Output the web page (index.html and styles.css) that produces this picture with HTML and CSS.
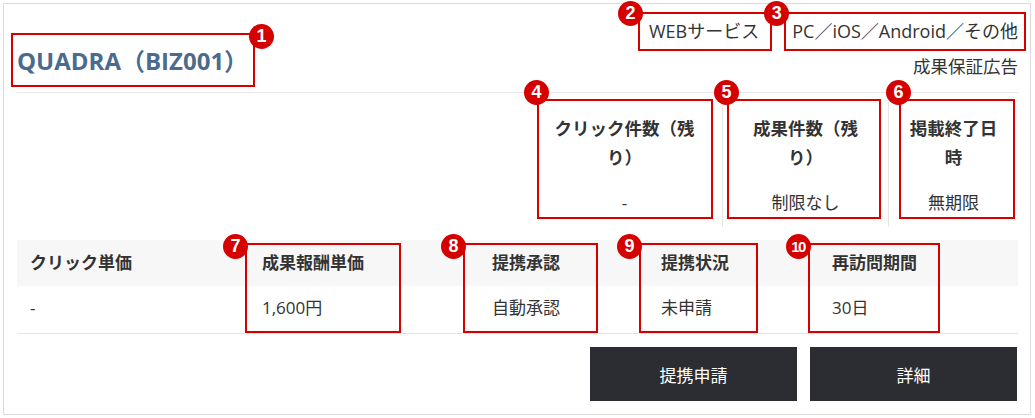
FILE: index.html
```html
<!DOCTYPE html>
<html lang="ja">
<head>
<meta charset="utf-8">
<title>QUADRA</title>
<link rel="stylesheet" href="styles.css">
</head>
<body>
<div class="card">
  <header class="card-head">
    <h2 class="title hl"><span class="frame frame-1"><span class="badge badge-tr">1</span></span>QUADRA（BIZ001）</h2>
    <div class="meta">
      <ul class="tags">
        <li class="tag hl"><span class="frame frame-2"><span class="badge badge-tag">2</span></span>WEBサービス</li>
        <li class="tag hl"><span class="frame frame-3"><span class="badge badge-tag">3</span></span>PC／iOS／Android／その他</li>
      </ul>
      <p class="ad-type">成果保証広告</p>
    </div>
  </header>

  <section class="stats">
    <div class="stat stat-1">
      <span class="frame frame-4"><span class="badge badge-top">4</span></span>
      <div class="stat-label">クリック件数（残り）</div>
      <div class="stat-value">-</div>
    </div>
    <div class="stat stat-2">
      <span class="frame frame-5"><span class="badge badge-top">5</span></span>
      <div class="stat-label">成果件数（残り）</div>
      <div class="stat-value">制限なし</div>
    </div>
    <div class="stat stat-3">
      <span class="frame frame-6"><span class="badge badge-top">6</span></span>
      <div class="stat-label">掲載終了日時</div>
      <div class="stat-value">無期限</div>
    </div>
  </section>

  <section class="terms">
    <div class="term">
      <div class="term-h">クリック単価</div>
      <div class="term-v">-</div>
    </div>
    <div class="term">
      <span class="frame frame-7"><span class="badge">7</span></span>
      <div class="term-h">成果報酬単価</div>
      <div class="term-v">1,600円</div>
    </div>
    <div class="term">
      <span class="frame frame-8"><span class="badge">8</span></span>
      <div class="term-h">提携承認</div>
      <div class="term-v">自動承認</div>
    </div>
    <div class="term">
      <span class="frame frame-9"><span class="badge">9</span></span>
      <div class="term-h">提携状況</div>
      <div class="term-v">未申請</div>
    </div>
    <div class="term">
      <span class="frame frame-10"><span class="badge badge-wide">10</span></span>
      <div class="term-h">再訪問期間</div>
      <div class="term-v">30日</div>
    </div>
  </section>

  <div class="actions">
    <button class="btn" type="button">提携申請</button>
    <button class="btn" type="button">詳細</button>
  </div>
</div>
</body>
</html>
```
FILE: styles.css
```css
* {
  box-sizing: border-box;
  margin: 0;
  padding: 0;
}

body {
  margin: 0;
  padding: 3px;
  background: #fff;
  font-family: "Open Sans", "Noto Sans CJK JP", sans-serif;
  font-size: 17px;
  color: #333;
}

.card {
  width: 1028px;
  border: 1px solid #dcdcdc;
  padding: 14px 12px 13px 13px;
}

/* header */
.card-head {
  display: flex;
  justify-content: space-between;
  align-items: flex-end;
  padding-bottom: 14px;
  border-bottom: 1px solid #e8e8e8;
}

.title {
  position: relative;
  font-size: 24px;
  font-weight: 700;
  line-height: 34px;
  color: #4b6b8e;
}

.meta {
  display: flex;
  flex-direction: column;
  align-items: flex-end;
}

.tags {
  display: flex;
  gap: 33px;
  list-style: none;
}

.tag {
  position: relative;
  line-height: 26px;
  font-size: 18px;
}

.ad-type {
  margin-top: 10px;
  line-height: 24px;
  font-size: 17.5px;
}

/* stats */
.stats {
  display: flex;
  justify-content: flex-end;
  margin-top: 9px;
}

.stat {
  position: relative;
  display: flex;
  flex-direction: column;
  align-items: center;
  text-align: center;
  height: 125px;
  padding: 12px 20px;
}

.stat-1 { width: 195px; }
.stat-2 { width: 166px; border-left: 1px solid #e6e6e6; padding: 12px 24px; }
.stat-3 { width: 130px; border-left: 1px solid #e6e6e6; padding: 12px 15px; }

.stat-label {
  font-weight: 700;
  font-size: 17.5px;
  line-height: 29px;
}

.stat-value {
  margin-top: 19px;
  line-height: 24px;
}

/* terms table */
.terms {
  display: grid;
  grid-template-columns: 232px 230px 169px 171px 1fr;
  margin-top: 13px;
  border-bottom: 1px solid #e5e5e5;
}

.term {
  position: relative;
}

.term-h {
  height: 46px;
  line-height: 46px;
  padding-left: 13px;
  background: #f7f7f7;
  font-weight: 700;
}

.term-v {
  height: 47px;
  line-height: 44px;
  padding-left: 13px;
}

/* buttons */
.actions {
  display: flex;
  justify-content: flex-end;
  gap: 13px;
  margin-top: 13px;
  padding-right: 1px;
}

.btn {
  width: 207px;
  height: 54px;
  border: none;
  background: #2b2d33;
  color: #fff;
  font-family: inherit;
  font-size: 17px;
  display: flex;
  align-items: center;
  justify-content: center;
}

/* annotations */
.frame {
  position: absolute;
  border: 2px solid #d50000;
  pointer-events: none;
  z-index: 2;
}

.badge {
  position: absolute;
  left: -24px;
  top: -11px;
  width: 25px;
  height: 25px;
  border-radius: 50%;
  background: #d50000;
  color: #fff;
  font-family: "Liberation Sans", Arial, sans-serif;
  font-weight: 700;
  font-size: 18px;
  line-height: 25px;
  text-align: center;
  z-index: 3;
}

.badge-tr { left: auto; right: -21px; top: -11px; }
.badge-tag { left: -22px; top: -13px; }
.badge-top { left: -15px; top: -21px; }
.badge-wide { font-size: 15px; letter-spacing: -1.5px; text-indent: -1px; }

.frame-1 { top: -11px; left: -6px; right: -7px; bottom: -9px; }
.frame-2 { top: -6px; left: -11px; right: -13px; bottom: -7px; }
.frame-3 { top: -6px; left: -8px; right: -8px; bottom: -7px; }
.frame-4 { top: -3px; left: 10px; right: 9px; bottom: 8px; }
.frame-5 { top: -3px; left: 4px; right: 7px; bottom: 8px; }
.frame-6 { top: -3px; left: 10px; right: 3px; bottom: 8px; }
.frame-7 { top: 3px; left: -4px; right: 78px; bottom: 0; }
.frame-8 { top: 3px; left: -16px; right: 50px; bottom: 0; }
.frame-9 { top: 3px; left: -9px; right: 61px; bottom: 0; }
.frame-10 { top: 3px; left: -11px; right: 78px; bottom: 0; }
```
